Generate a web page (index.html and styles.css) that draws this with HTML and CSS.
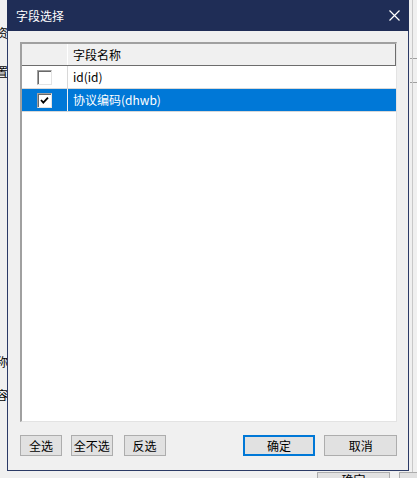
FILE: index.html
```html
<!DOCTYPE html>
<html lang="zh-CN">
<head>
    <meta charset="UTF-8">
    <title>字段选择</title>
    <link rel="stylesheet" href="styles.css">
</head>
<body>
    <div class="backdrop">
        <span class="bg-char c1">资</span>
        <span class="bg-char c2">置</span>
        <span class="bg-char c3">称</span>
        <span class="bg-char c4">容</span>
        <div class="bg-line l1"></div>
        <div class="bg-line l2"></div>
        <div class="bg-vline"></div>
        <div class="bg-button">确定</div>
        <div class="bg-box"></div>
    </div>

    <div class="dialog">
        <div class="title-bar">
            <span class="title">字段选择</span>
            <svg class="close" width="11" height="11" viewBox="0 0 11 11">
                <path d="M0.5 0.5 L10.5 10.5 M10.5 0.5 L0.5 10.5" stroke="#fff" stroke-width="1.2" fill="none"/>
            </svg>
        </div>
        <div class="dialog-body">
            <div class="grid">
                <div class="grid-row header">
                    <div class="cell check-cell"></div>
                    <div class="cell name-cell">字段名称</div>
                </div>
                <div class="grid-row">
                    <div class="cell check-cell"><span class="checkbox"></span></div>
                    <div class="cell name-cell">id(id)</div>
                </div>
                <div class="grid-row selected">
                    <div class="cell check-cell">
                        <span class="checkbox">
                            <svg width="11" height="11" viewBox="0 0 11 11">
                                <path d="M2 5 L4.3 7.6 L9 2.6" stroke="#000" stroke-width="1.8" fill="none"/>
                            </svg>
                        </span>
                    </div>
                    <div class="cell name-cell">协议编码(dhwb)</div>
                </div>
            </div>
            <div class="button-bar">
                <button class="btn btn-all">全选</button>
                <button class="btn btn-none">全不选</button>
                <button class="btn btn-invert">反选</button>
                <button class="btn btn-ok">确定</button>
                <button class="btn btn-cancel">取消</button>
            </div>
        </div>
    </div>
</body>
</html>
```

FILE: styles.css
```css
body {
    margin: 0;
    width: 417px;
    height: 478px;
    overflow: hidden;
    background: #f0f0f0;
    font-family: "Noto Sans CJK SC", "Microsoft YaHei", sans-serif;
    font-size: 12px;
    color: #000;
    position: relative;
}
.backdrop {
    position: absolute;
    left: 0;
    top: 0;
    width: 417px;
    height: 478px;
}
.bg-char {
    position: absolute;
    left: -4px;
    font-size: 12px;
    line-height: 12px;
}
.c1 { top: 27px; }
.c2 { top: 66px; }
.c3 { top: 356px; }
.c4 { top: 389px; }
.bg-line {
    position: absolute;
    left: 410px;
    width: 7px;
    height: 1px;
    background: #a0a0a0;
}
.l1 { top: 58px; }
.l2 { top: 82px; }
.bg-vline {
    position: absolute;
    left: 412px;
    top: 0;
    width: 1px;
    height: 478px;
    background: #c8c8c8;
}
.bg-button {
    position: absolute;
    left: 317px;
    top: 472px;
    width: 71px;
    height: 20px;
    background: #e1e1e1;
    border: 1px solid #adadad;
    text-align: center;
    line-height: 14px;
    font-size: 12px;
}
.bg-box {
    position: absolute;
    left: 399px;
    top: 472px;
    width: 20px;
    height: 20px;
    background: #e1e1e1;
    border: 1px solid #adadad;
}

.dialog {
    position: relative;
    margin-left: 7px;
    width: 400px;
    height: 470px;
    background: #f0f0f0;
    border: 1px solid #2b3a66;
    border-top: none;
}
.title-bar {
    height: 31px;
    background: #1f2d56;
    display: flex;
    align-items: center;
    justify-content: space-between;
    padding: 0 9px 0 8px;
    margin: 0 -1px;
}
.title {
    color: #fff;
    font-size: 12px;
    line-height: 14px;
    padding-left: 1px;
}
.close {
    display: block;
}
.dialog-body {
    padding: 11px 11px 0 12px;
}
.grid {
    height: 377px;
    background: #fff;
    border-top: 2px solid #a0a0a0;
    border-left: 2px solid #a0a0a0;
    border-right: 1px solid #e3e3e3;
    border-bottom: 1px solid #e3e3e3;
}
.grid-row {
    display: flex;
    height: 22px;
    border-bottom: 1px solid #d8d8d8;
}
.grid-row.header {
    height: 21px;
    background: #f0f0f0;
    border-bottom: 1px solid #6d6d6d;
    border-right: 1px solid #6d6d6d;
}
.cell {
    display: flex;
    align-items: center;
}
.check-cell {
    width: 45px;
    justify-content: center;
    border-right: 1px solid #d8d8d8;
}
.header .check-cell {
    border-right: 1px solid #ffffff;
}
.name-cell {
    flex: 1;
    padding-left: 5px;
    line-height: 14px;
}
.selected {
    background: #0078d7;
    color: #fff;
}
.selected .check-cell {
    border-right-color: #f0f0f0;
}
.checkbox {
    box-sizing: border-box;
    width: 15px;
    height: 15px;
    background: #fff;
    border: 1px solid;
    border-color: #a0a0a0 #e3e3e3 #e3e3e3 #a0a0a0;
    box-shadow: inset 1px 1px 0 #696969;
    display: flex;
    align-items: center;
    justify-content: center;
    margin-left: -1px;
}
.checkbox svg {
    display: block;
    margin: 1px 0 0 1px;
}
.button-bar {
    display: flex;
    margin-top: 13px;
}
.btn {
    box-sizing: border-box;
    height: 21px;
    padding: 0;
    background: #e1e1e1;
    border: 1px solid #adadad;
    font-family: "Noto Sans CJK SC", sans-serif;
    font-size: 12px;
    line-height: 14px;
    color: #000;
}
.btn-all { width: 42px; }
.btn-none { width: 42px; margin-left: 9px; }
.btn-invert { width: 42px; margin-left: 11px; }
.btn-ok {
    width: 73px;
    margin-left: 77px;
    border: 2px solid #0078d7;
}
.btn-cancel { width: 73px; margin-left: 9px; }
```
